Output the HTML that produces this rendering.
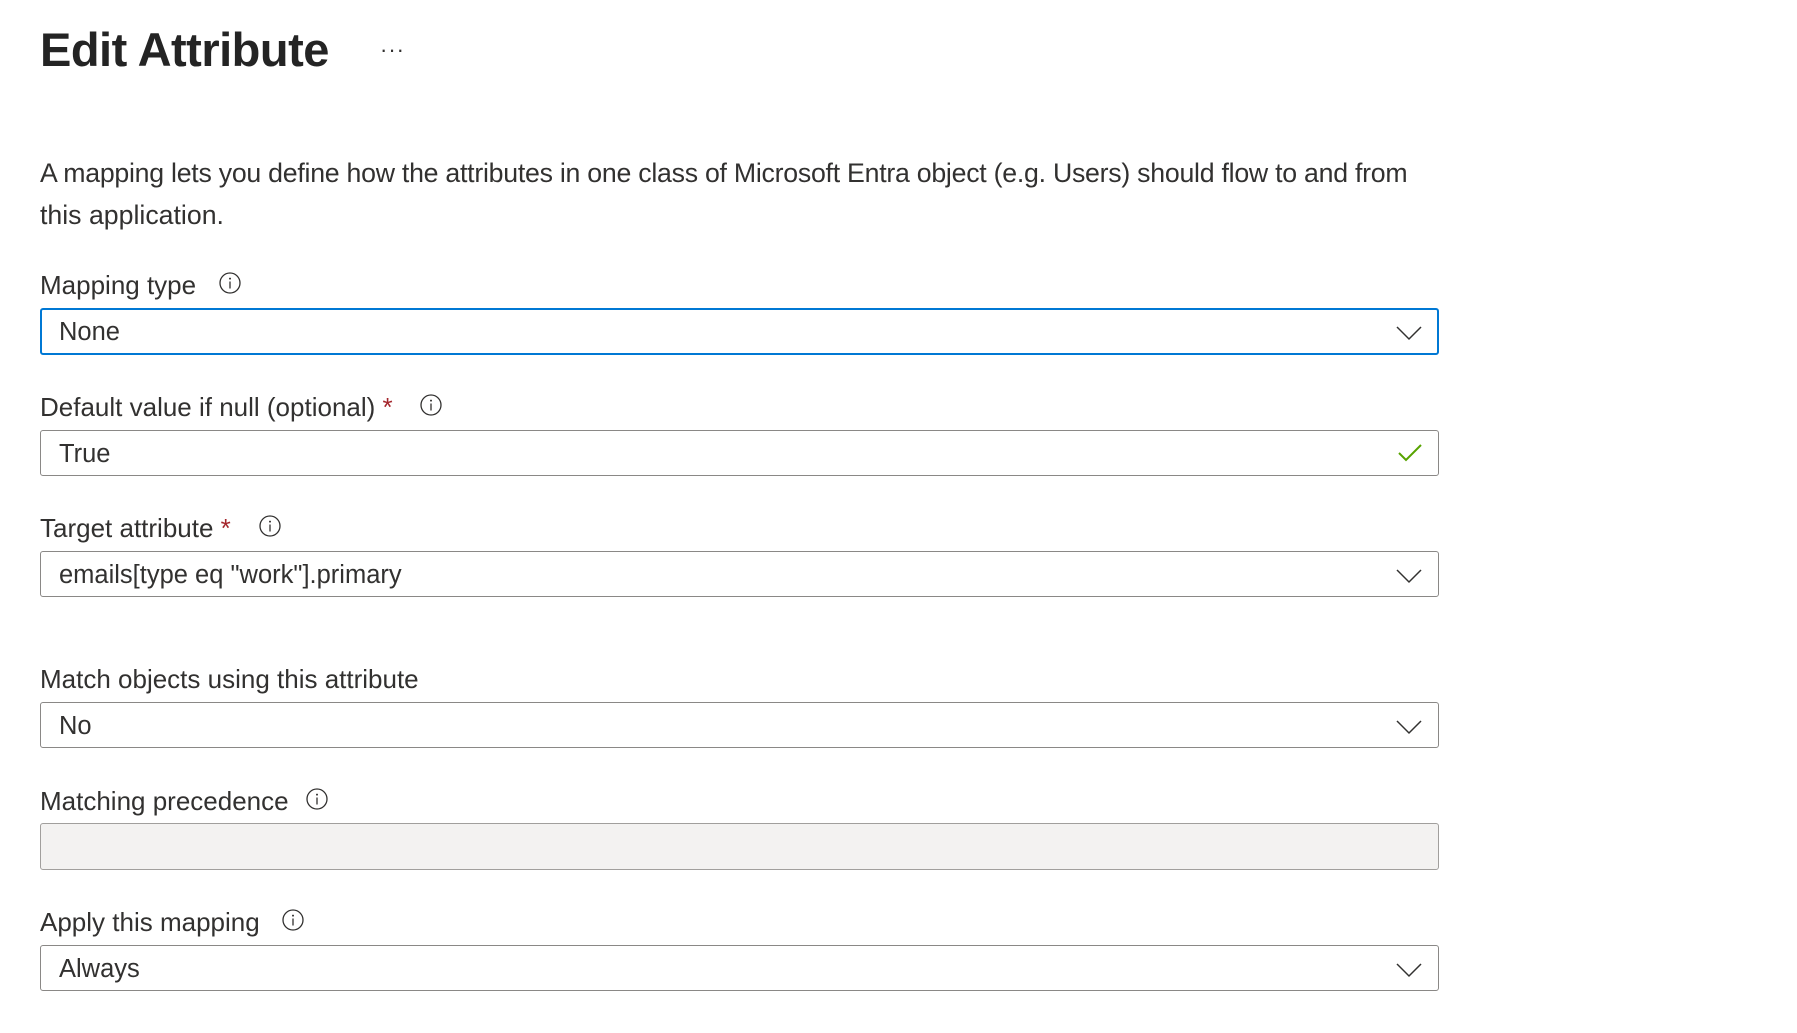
<!DOCTYPE html>
<html><head><meta charset="utf-8"><style>
html,body{margin:0;padding:0;background:#fff;width:1797px;height:1033px;overflow:hidden;font-family:"Liberation Sans",sans-serif;color:#323130;}
.a{position:absolute;white-space:nowrap;}
h1{position:absolute;left:40px;top:21px;margin:0;font-size:47px;font-weight:bold;color:#242424;letter-spacing:-0.5px;line-height:58px;}
.dots{left:380px;top:37px;font-size:22px;color:#323130;letter-spacing:1px;}
.p{left:40px;font-size:26.7px;line-height:30px;}
.lbl{left:40px;font-size:26px;line-height:30px;}
.box{position:absolute;left:40px;border:1px solid #8a8886;border-radius:3px;box-sizing:border-box;width:1399px;}
.box span{position:absolute;left:18px;top:0;font-size:25.5px;}
.chev{position:absolute;right:15px;}
.star{color:#a4262c;}
.info{position:absolute;width:22px;height:22px;}
</style></head><body>
<h1>Edit Attribute</h1>
<div class="a dots">···</div>
<div class="a p" style="top:158px;letter-spacing:-0.25px">A mapping lets you define how the attributes in one class of Microsoft Entra object (e.g. Users) should flow to and from</div>
<div class="a p" style="top:200px">this application.</div>

<svg width="0" height="0" style="position:absolute"><defs>
<symbol id="i" viewBox="0 0 22 22"><circle cx="11" cy="11" r="10" fill="none" stroke="#323130" stroke-width="1.3"/><circle cx="11" cy="6.6" r="1" fill="#323130"/><path d="M11 9.5v7" stroke="#323130" stroke-width="1.3"/></symbol>
<symbol id="c" viewBox="0 0 28 16"><path d="M2 2l12 12 12-12" fill="none" stroke="#323130" stroke-width="1.5"/></symbol>
</defs></svg>

<div class="a lbl" style="top:270px">Mapping type</div>
<svg class="info" style="left:219px;top:272px"><use href="#i"/></svg>
<div class="box" style="top:308px;height:47px;border:2px solid #0078d4;"><span style="top:7px;left:17px;line-height:30px">None</span><svg class="chev" width="28" height="16" style="top:15px;right:14px"><use href="#c"/></svg></div>

<div class="a lbl" style="top:392px">Default value if null (optional) <span class="star">*</span></div>
<svg class="info" style="left:420px;top:394px"><use href="#i"/></svg>
<div class="box" style="top:430px;height:46px"><span style="top:8px;line-height:30px">True</span><svg class="chev" width="28" height="22" style="top:11px;right:14px"><path d="M3 11l7 7L25 3" fill="none" stroke="#57a300" stroke-width="2"/></svg></div>

<div class="a lbl" style="top:513px">Target attribute <span class="star">*</span></div>
<svg class="info" style="left:259px;top:515px"><use href="#i"/></svg>
<div class="box" style="top:551px;height:46px"><span style="top:8px;line-height:30px">emails[type eq "work"].primary</span><svg class="chev" width="28" height="16" style="top:16px"><use href="#c"/></svg></div>

<div class="a lbl" style="top:664px">Match objects using this attribute</div>
<div class="box" style="top:702px;height:46px"><span style="top:8px;line-height:30px">No</span><svg class="chev" width="28" height="16" style="top:16px"><use href="#c"/></svg></div>

<div class="a lbl" style="top:786px">Matching precedence</div>
<svg class="info" style="left:306px;top:788px"><use href="#i"/></svg>
<div class="box" style="top:823px;height:47px;background:#f3f2f1;border-color:#a19f9d"></div>

<div class="a lbl" style="top:907px">Apply this mapping</div>
<svg class="info" style="left:282px;top:909px"><use href="#i"/></svg>
<div class="box" style="top:945px;height:46px"><span style="top:8px;line-height:30px">Always</span><svg class="chev" width="28" height="16" style="top:16px"><use href="#c"/></svg></div>
</body></html>
